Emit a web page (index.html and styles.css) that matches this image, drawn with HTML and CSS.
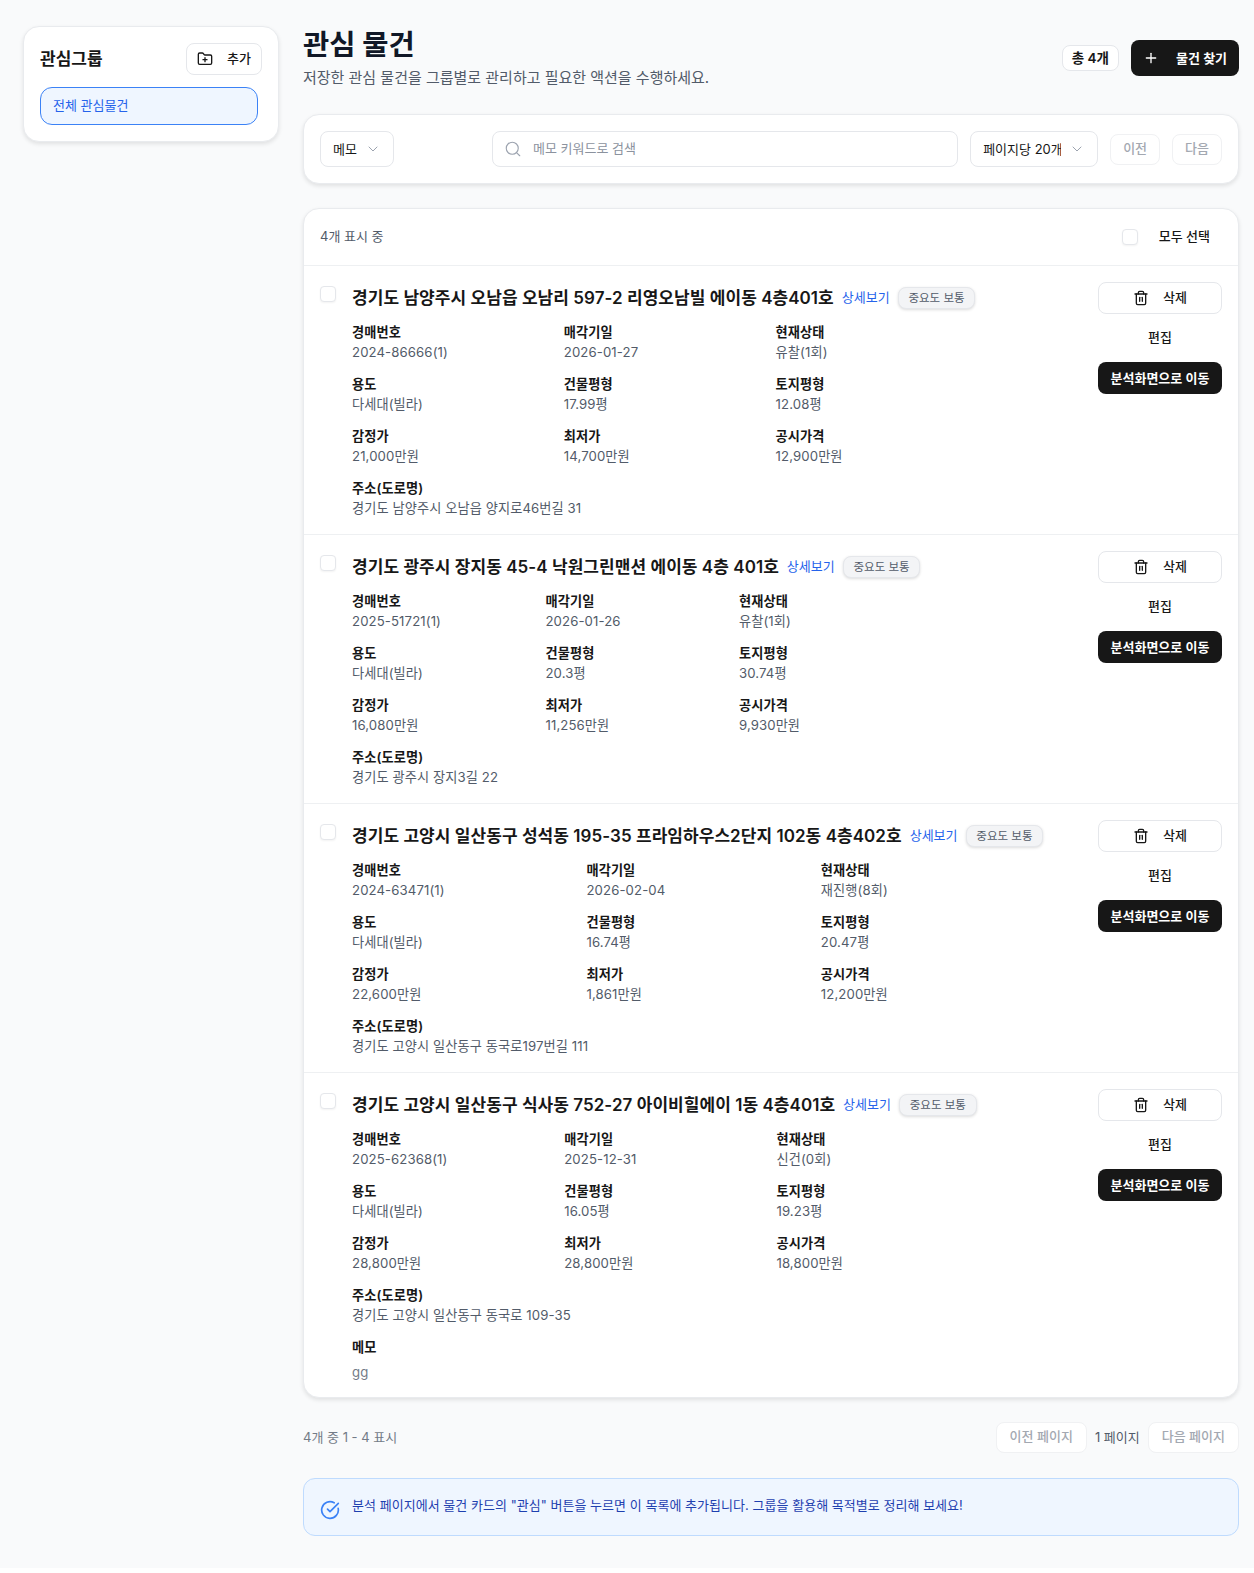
FILE: index.html
```html
<!DOCTYPE html>
<html lang="ko">
<head>
<meta charset="utf-8">
<title>관심 물건</title>
<link rel="stylesheet" href="styles.css">
</head>
<body>
<div class="page">
  <aside class="sidebar card">
    <div class="side-head">
      <h2 class="side-title">관심그룹</h2>
      <button class="btn add-btn"><svg class="ico" viewBox="0 0 24 24"><path d="M12 10v6"/><path d="M9 13h6"/><path d="M20 20a2 2 0 0 0 2-2V8a2 2 0 0 0-2-2h-7.9a2 2 0 0 1-1.69-.9L9.6 3.9A2 2 0 0 0 7.93 3H4a2 2 0 0 0-2 2v13a2 2 0 0 0 2 2Z"/></svg>추가</button>
    </div>
    <div class="side-item">전체 관심물건</div>
  </aside>
  <main class="main">
    <header class="head">
      <div class="head-text">
        <h1 class="h1">관심 물건</h1>
        <p class="sub">저장한 관심 물건을 그룹별로 관리하고 필요한 액션을 수행하세요.</p>
      </div>
      <div class="head-actions">
        <span class="count">총 4개</span>
        <button class="btn-dark find"><svg class="ico" viewBox="0 0 24 24"><path d="M5 12h14"/><path d="M12 5v14"/></svg>물건 찾기</button>
      </div>
    </header>

    <section class="card filter">
      <div class="select memo-sel">메모<svg class="chev" viewBox="0 0 24 24"><path d="m6 9 6 6 6-6"/></svg></div>
      <div class="search"><svg class="search-ico" viewBox="0 0 24 24"><circle cx="11" cy="11" r="8"/><path d="m21 21-4.3-4.3"/></svg><span class="ph">메모 키워드로 검색</span></div>
      <div class="select"><span class="sel-text">페이지당 20개</span><svg class="chev" viewBox="0 0 24 24"><path d="m6 9 6 6 6-6"/></svg></div>
      <button class="btn off">이전</button>
      <button class="btn off">다음</button>
    </section>

    <section class="card list">
      <div class="list-head">
        <span class="showing">4개 표시 중</span>
        <label class="all"><span class="check"></span><span class="all-text">모두 선택</span></label>
      </div>

      <article class="row">
        <span class="check"></span>
        <div class="body">
          <div class="title-row"><h3 class="title">경기도 남양주시 오남읍 오남리 597-2 리영오남빌 에이동 4층401호</h3><a class="more">상세보기</a><span class="badge">중요도 보통</span></div>
          <dl class="grid">
            <div><dt>경매번호</dt><dd>2024-86666(1)</dd></div>
            <div><dt>매각기일</dt><dd>2026-01-27</dd></div>
            <div><dt>현재상태</dt><dd>유찰(1회)</dd></div>
            <div><dt>용도</dt><dd>다세대(빌라)</dd></div>
            <div><dt>건물평형</dt><dd>17.99평</dd></div>
            <div><dt>토지평형</dt><dd>12.08평</dd></div>
            <div><dt>감정가</dt><dd>21,000만원</dd></div>
            <div><dt>최저가</dt><dd>14,700만원</dd></div>
            <div><dt>공시가격</dt><dd>12,900만원</dd></div>
            <div class="wide"><dt>주소(도로명)</dt><dd>경기도 남양주시 오남읍 양지로46번길 31</dd></div>
          </dl>
        </div>
        <div class="actions">
          <button class="btn del"><svg class="ico" viewBox="0 0 24 24"><path d="M3 6h18"/><path d="M19 6v14c0 1-1 2-2 2H7c-1 0-2-1-2-2V6"/><path d="M8 6V4c0-1 1-2 2-2h4c1 0 2 1 2 2v2"/><path d="M10 11v6"/><path d="M14 11v6"/></svg>삭제</button>
          <button class="ghost">편집</button>
          <button class="btn-dark go">분석화면으로 이동</button>
        </div>
      </article>

      <article class="row">
        <span class="check"></span>
        <div class="body">
          <div class="title-row"><h3 class="title">경기도 광주시 장지동 45-4 낙원그린맨션 에이동 4층 401호</h3><a class="more">상세보기</a><span class="badge">중요도 보통</span></div>
          <dl class="grid">
            <div><dt>경매번호</dt><dd>2025-51721(1)</dd></div>
            <div><dt>매각기일</dt><dd>2026-01-26</dd></div>
            <div><dt>현재상태</dt><dd>유찰(1회)</dd></div>
            <div><dt>용도</dt><dd>다세대(빌라)</dd></div>
            <div><dt>건물평형</dt><dd>20.3평</dd></div>
            <div><dt>토지평형</dt><dd>30.74평</dd></div>
            <div><dt>감정가</dt><dd>16,080만원</dd></div>
            <div><dt>최저가</dt><dd>11,256만원</dd></div>
            <div><dt>공시가격</dt><dd>9,930만원</dd></div>
            <div class="wide"><dt>주소(도로명)</dt><dd>경기도 광주시 장지3길 22</dd></div>
          </dl>
        </div>
        <div class="actions">
          <button class="btn del"><svg class="ico" viewBox="0 0 24 24"><path d="M3 6h18"/><path d="M19 6v14c0 1-1 2-2 2H7c-1 0-2-1-2-2V6"/><path d="M8 6V4c0-1 1-2 2-2h4c1 0 2 1 2 2v2"/><path d="M10 11v6"/><path d="M14 11v6"/></svg>삭제</button>
          <button class="ghost">편집</button>
          <button class="btn-dark go">분석화면으로 이동</button>
        </div>
      </article>

      <article class="row">
        <span class="check"></span>
        <div class="body">
          <div class="title-row"><h3 class="title">경기도 고양시 일산동구 성석동 195-35 프라임하우스2단지 102동 4층402호</h3><a class="more">상세보기</a><span class="badge">중요도 보통</span></div>
          <dl class="grid">
            <div><dt>경매번호</dt><dd>2024-63471(1)</dd></div>
            <div><dt>매각기일</dt><dd>2026-02-04</dd></div>
            <div><dt>현재상태</dt><dd>재진행(8회)</dd></div>
            <div><dt>용도</dt><dd>다세대(빌라)</dd></div>
            <div><dt>건물평형</dt><dd>16.74평</dd></div>
            <div><dt>토지평형</dt><dd>20.47평</dd></div>
            <div><dt>감정가</dt><dd>22,600만원</dd></div>
            <div><dt>최저가</dt><dd>1,861만원</dd></div>
            <div><dt>공시가격</dt><dd>12,200만원</dd></div>
            <div class="wide"><dt>주소(도로명)</dt><dd>경기도 고양시 일산동구 동국로197번길 111</dd></div>
          </dl>
        </div>
        <div class="actions">
          <button class="btn del"><svg class="ico" viewBox="0 0 24 24"><path d="M3 6h18"/><path d="M19 6v14c0 1-1 2-2 2H7c-1 0-2-1-2-2V6"/><path d="M8 6V4c0-1 1-2 2-2h4c1 0 2 1 2 2v2"/><path d="M10 11v6"/><path d="M14 11v6"/></svg>삭제</button>
          <button class="ghost">편집</button>
          <button class="btn-dark go">분석화면으로 이동</button>
        </div>
      </article>

      <article class="row">
        <span class="check"></span>
        <div class="body">
          <div class="title-row"><h3 class="title">경기도 고양시 일산동구 식사동 752-27 아이비힐에이 1동 4층401호</h3><a class="more">상세보기</a><span class="badge">중요도 보통</span></div>
          <dl class="grid">
            <div><dt>경매번호</dt><dd>2025-62368(1)</dd></div>
            <div><dt>매각기일</dt><dd>2025-12-31</dd></div>
            <div><dt>현재상태</dt><dd>신건(0회)</dd></div>
            <div><dt>용도</dt><dd>다세대(빌라)</dd></div>
            <div><dt>건물평형</dt><dd>16.05평</dd></div>
            <div><dt>토지평형</dt><dd>19.23평</dd></div>
            <div><dt>감정가</dt><dd>28,800만원</dd></div>
            <div><dt>최저가</dt><dd>28,800만원</dd></div>
            <div><dt>공시가격</dt><dd>18,800만원</dd></div>
            <div class="wide"><dt>주소(도로명)</dt><dd>경기도 고양시 일산동구 동국로 109-35</dd></div>
            <div class="wide memo"><dt>메모</dt><dd>gg</dd></div>
          </dl>
        </div>
        <div class="actions">
          <button class="btn del"><svg class="ico" viewBox="0 0 24 24"><path d="M3 6h18"/><path d="M19 6v14c0 1-1 2-2 2H7c-1 0-2-1-2-2V6"/><path d="M8 6V4c0-1 1-2 2-2h4c1 0 2 1 2 2v2"/><path d="M10 11v6"/><path d="M14 11v6"/></svg>삭제</button>
          <button class="ghost">편집</button>
          <button class="btn-dark go">분석화면으로 이동</button>
        </div>
      </article>
    </section>

    <nav class="pager">
      <span class="pager-info">4개 중 1 - 4 표시</span>
      <div class="pager-btns">
        <button class="btn off wide-btn">이전 페이지</button>
        <span class="cur">1 페이지</span>
        <button class="btn off wide-btn">다음 페이지</button>
      </div>
    </nav>

    <div class="info">
      <svg class="info-ico" viewBox="0 0 24 24"><path d="M21.801 10A10 10 0 1 1 17 3.335"/><path d="m9 11 3 3L22 4"/></svg>
      <p>분석 페이지에서 물건 카드의 "관심" 버튼을 누르면 이 목록에 추가됩니다. 그룹을 활용해 목적별로 정리해 보세요!</p>
    </div>
  </main>
</div>
</body>
</html>
```

FILE: styles.css
```css
* { box-sizing: border-box; }
html, body { margin: 0; padding: 0; background: #fff; }
body { font-family: Inter, "Noto Sans CJK KR", sans-serif; font-size: 14px; line-height: 20px; color: #171717; }
h1, h2, h3, p, dl, dd { margin: 0; }
button { font: inherit; cursor: pointer; }
svg { fill: none; stroke: currentColor; stroke-width: 2; stroke-linecap: round; stroke-linejoin: round; flex: none; }

.page { display: flex; align-items: flex-start; gap: 24px; padding: 26px 15px 32px 23px; background: #f9fafb; }
.card { background: #fff; border: 1px solid #e9ebee; border-radius: 16px; box-shadow: 0 2px 4px rgba(0,0,0,.1); }

.sidebar { flex: none; width: 256px; padding: 16px; height: 116px; }
.side-head { display: flex; align-items: center; justify-content: space-between; height: 32px; margin-bottom: 12px; }
.side-title { font-size: 17px; line-height: 24px; font-weight: 600; }
.btn { display: inline-flex; align-items: center; justify-content: center; background: #fff; border: 1px solid #e5e7eb; border-radius: 8px; color: #171717; font-weight: 500; padding: 0 12px; white-space: nowrap; }
.ico { width: 16px; height: 16px; }
.add-btn { width: 76px; height: 32px; gap: 14px; font-size: 13px; padding-bottom: 2px; }
.add-btn .ico, .del .ico { margin-top: 2px; }
.side-item { width: 218px; height: 38px; line-height: 34px; padding: 0 12px; background: #eff6ff; border: 1px solid #3b82f6; border-radius: 12px; color: #2563eb; font-size: 13px; }

.main { flex: 1; min-width: 0; }
.head { display: flex; align-items: center; justify-content: space-between; height: 63px; margin-top: 1px; margin-bottom: 24px; }
.h1 { font-size: 28.5px; line-height: 36px; font-weight: 700; color: #111827; }
.sub { font-size: 15px; line-height: 24px; color: #525b69; margin-top: 3px; letter-spacing: -.01px; }
.head-actions { display: flex; align-items: center; gap: 12px; margin-bottom: 2px; }
.count { height: 26px; line-height: 24px; padding: 0 9px; background: #fff; border: 1px solid #e5e7eb; border-radius: 8px; font-size: 13.5px; font-weight: 600; }
.btn-dark { display: inline-flex; align-items: center; justify-content: center; background: #171717; border: 0; border-radius: 8px; color: #fff; font-weight: 500; white-space: nowrap; }
.find { width: 108px; height: 36px; gap: 17px; font-size: 13px; font-weight: 600; }

.filter { display: flex; align-items: center; gap: 12px; height: 70px; padding: 0 16px; margin-bottom: 24px; }
.select { display: inline-flex; align-items: center; justify-content: space-between; height: 36px; padding: 0 12px; gap: 8px; background: #fff; border: 1px solid #e5e7eb; border-radius: 8px; white-space: nowrap; font-size: 13px; }
.memo-sel { width: 74px; margin-right: 86px; }
.sel-text { width: 78px; overflow: hidden; }
.chev { width: 16px; height: 16px; color: #9ca3af; stroke-width: 1.5; }
.search { flex: 1; display: flex; align-items: center; gap: 11px; height: 36px; padding: 0 11px; border: 1px solid #e5e7eb; border-radius: 8px; color: #8b929e; font-size: 13px; }
.ph { padding-bottom: 2px; }
.search-ico { width: 18px; height: 18px; color: #9ca3af; stroke-width: 1.5; }
.off { height: 31px; color: #a3a8b1; border-color: #f0f1f3; padding: 0 12px 2px; font-size: 13px; }
.wide-btn { padding: 0 13px 2px; }

.list { overflow: hidden; }
.list-head { display: flex; align-items: center; justify-content: space-between; height: 57px; padding: 0 16px; border-bottom: 1px solid #eef0f2; }
.showing { font-size: 13px; color: #525b69; padding-bottom: 2px; }
.all { display: flex; align-items: center; gap: 12px; padding-right: 12px; font-weight: 500; font-size: 13px; }
.all-text { padding-bottom: 2px; }
.all .check { margin: 0 9px 0 0; }
.check { flex: none; width: 16px; height: 16px; background: #fff; border: 1px solid #e5e7eb; border-radius: 4px; box-shadow: 0 1px 2px rgba(0,0,0,.05); }
.row { display: flex; align-items: flex-start; padding: 16px; border-bottom: 1px solid #eef0f2; }
.row:last-child { border-bottom: 0; padding-bottom: 15px; }
.row > .check { margin: 4px 16px 0 0; }
.body { flex: none; }
.title-row { display: flex; align-items: center; gap: 8px; height: 32px; margin-bottom: 8px; }
.title { font-size: 17px; line-height: 28px; font-weight: 600; white-space: nowrap; letter-spacing: .05px; }
.more { color: #2563eb; font-size: 13px; padding-bottom: 2px; }
.badge { height: 22px; line-height: 20px; padding: 0 9.8px; background: #f3f4f6; border: 1px solid #e5e7eb; border-radius: 8px; box-shadow: 0 1px 3px rgba(0,0,0,.14); font-size: 11.5px; color: #525b69; white-space: nowrap; }
.grid { display: grid; grid-template-columns: repeat(3, 1fr); gap: 12px; font-size: 13.2px; letter-spacing: .1px; }
.grid dt { font-weight: 600; }
.grid dd { color: #525b69; }
.wide { grid-column: 1 / -1; }
.memo dd { margin-top: 5px; color: #737b87; }
.actions { flex: none; width: 124px; margin-left: auto; display: flex; flex-direction: column; gap: 8px; }
.del { height: 32px; gap: 14px; font-size: 13px; padding-bottom: 2px; }
.ghost { height: 32px; background: none; border: 0; padding: 0 0 2px; font-weight: 500; font-size: 13px; color: #171717; }
.go { height: 32px; font-size: 13px; font-weight: 600; padding-bottom: 1px; }

.pager { display: flex; align-items: center; justify-content: space-between; height: 32px; margin-top: 23px; }
.pager-info { color: #737b87; font-size: 13px; }
.pager-btns { display: flex; align-items: center; gap: 8px; }
.cur { font-size: 13px; color: #525b69; }
.info { display: flex; align-items: center; gap: 12px; height: 58px; margin-top: 25px; padding: 0 16px; background: #eff6ff; border: 1px solid #bfdbfe; border-radius: 12px; color: #1e40af; font-size: 13px; letter-spacing: .03px; }
.info-ico { width: 20px; height: 20px; color: #3b82f6; margin-top: 6px; }
.info p { margin-top: -4px; }
```
